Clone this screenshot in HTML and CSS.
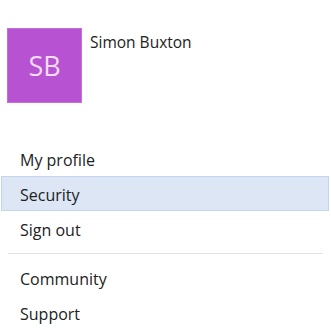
FILE: index.html
```html
<!DOCTYPE html>
<html lang="en">
<head>
    <meta charset="UTF-8">
    <meta name="viewport" content="width=device-width, initial-scale=1.0">
    <title>Account menu</title>
    <link rel="stylesheet" href="styles.css">
</head>
<body>
    <div class="account">
        <div class="header">
            <div class="avatar">SB</div>
            <div class="name">Simon Buxton</div>
        </div>
        <ul class="menu">
            <li class="menu-item">My profile</li>
            <li class="menu-item active">Security</li>
            <li class="menu-item">Sign out</li>
        </ul>
        <hr class="divider">
        <ul class="menu">
            <li class="menu-item">Community</li>
            <li class="menu-item">Support</li>
        </ul>
    </div>
</body>
</html>
```

FILE: styles.css
```css
body {
    font-family: "Open Sans", "Noto Sans", sans-serif;
    margin: 0;
    padding: 0;
    background-color: #ffffff;
    color: #222;
}

.account {
    width: 331px;
}

.header {
    display: flex;
    align-items: flex-start;
    padding: 28px 0 0 7px;
    height: 141px;
    box-sizing: border-box;
}

.avatar {
    width: 75px;
    height: 75px;
    background-color: #b752d3;
    color: #f3dcf8;
    font-size: 27px;
    display: flex;
    align-items: center;
    justify-content: center;
    box-sizing: border-box;
    border: 1px solid #c46fdc;
}

.name {
    margin-left: 8px;
    margin-top: 3px;
    font-size: 15.5px;
}

.menu {
    list-style-type: none;
    margin: 0 2px 0 1px;
    padding: 0;
}

.menu-item {
    height: 35px;
    padding-top: 3px;
    line-height: 31px;
    padding-left: 18px;
    font-size: 16px;
    border: 1px solid transparent;
    box-sizing: border-box;
}

.menu-item.active {
    background-color: #dce6f5;
    border-color: #c3d4ee;
}

.divider {
    border: 0;
    border-top: 1px solid #e3e3e3;
    margin: 7px 8px 6px 8px;
}
```
